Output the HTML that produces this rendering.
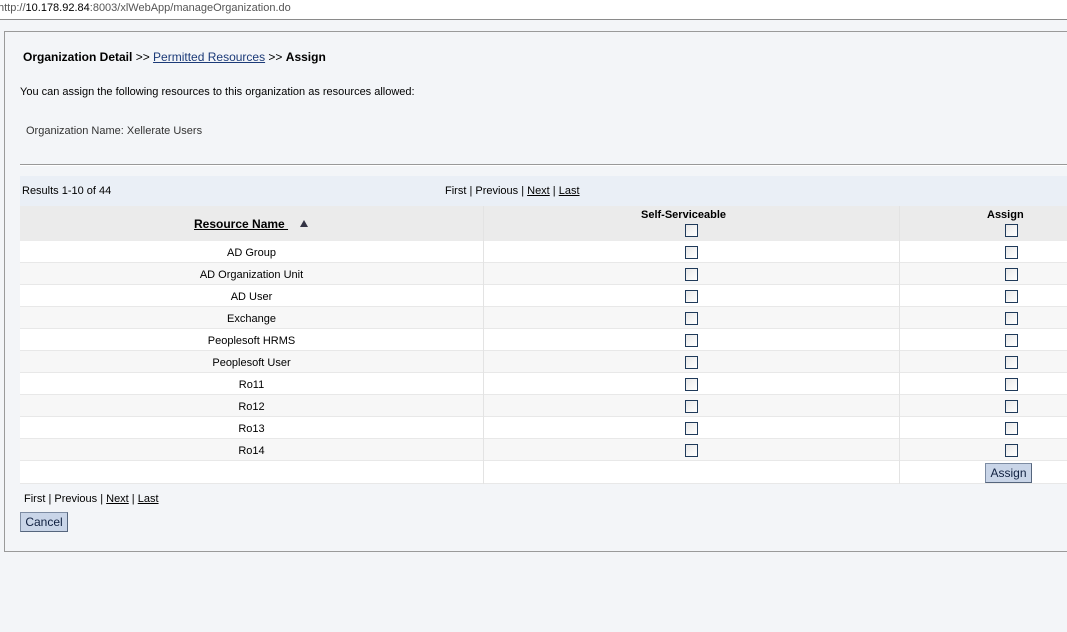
<!DOCTYPE html><html><head><style>
*{margin:0;padding:0;box-sizing:border-box}
body{width:1067px;height:632px;background:#f3f5f8;font-family:"Liberation Sans",sans-serif;font-size:11px;color:#000;position:relative;overflow:hidden}
.a{position:absolute}
a{color:#000;text-decoration:underline}
.cb{position:absolute;width:13px;height:13px;border:1px solid #1f3a5a;background:linear-gradient(135deg,#e8e8e8,#fff)}
.row{position:absolute;left:20px;width:1047px;height:22px;border-bottom:1px solid #e8e8e8}
.row span{position:absolute;left:0;width:463px;text-align:center;top:6px}
.vl{position:absolute;width:1px;background:#e3e3e3}
.btn{position:absolute;background:#c9d5e8;border:1px solid #7d8ca3;border-right-color:#55657d;border-bottom-color:#55657d;font-size:12px;color:#102040;text-align:center}
</style></head><body>
<div class="a" style="left:0;top:0;width:1067px;height:20px;background:#fff;border-bottom:1px solid #8a8a8a"></div>
<div class="a" style="left:-2px;top:2px;font-size:11px;color:#555">http://<b style="font-weight:normal;color:#000">10.178.92.84</b>:8003/xlWebApp/manageOrganization.do</div>
<div class="a" style="left:4px;top:31px;width:1070px;height:521px;border:1px solid #9a9a9a;border-right:none"></div>
<div class="a" style="left:23px;top:50px;font-size:12px"><b>Organization Detail</b> &gt;&gt; <a href="#" style="color:#1b3a78">Permitted Resources</a> &gt;&gt; <b>Assign</b></div>
<div class="a" style="left:20px;top:86px">You can assign the following resources to this organization as resources allowed:</div>
<div class="a" style="left:26px;top:125px;color:#333">Organization Name: Xellerate Users</div>
<div class="a" style="left:20px;top:164px;width:1047px;height:2px;border-top:1px solid #999;border-bottom:1px solid #fff"></div>
<div class="a" style="left:20px;top:176px;width:1047px;height:30px;background:#eaeff6"></div>
<div class="a" style="left:22px;top:185px">Results 1-10 of 44</div>
<div class="a" style="left:445px;top:185px">First | Previous | <a href="#">Next</a> | <a href="#">Last</a></div>
<div class="a" style="left:20px;top:206px;width:1047px;height:35px;background:#ebebeb"></div>
<div class="a" style="left:194px;top:217px;font-size:12px;font-weight:bold;text-decoration:underline">Resource Name&nbsp;</div>
<div class="a" style="left:300px;top:220px;width:0;height:0;border-left:4px solid transparent;border-right:4px solid transparent;border-bottom:7px solid #334"></div>
<div class="a" style="left:641px;top:209px;font-weight:bold">Self-Serviceable</div>
<div class="a" style="left:987px;top:209px;font-weight:bold">Assign</div>
<div class="cb" style="left:685px;top:224px"></div><div class="cb" style="left:1005px;top:224px"></div>
<div class="row" style="top:241px;background:#fff"><span>AD Group</span></div>
<div class="row" style="top:263px;background:#f7f7f7"><span>AD Organization Unit</span></div>
<div class="row" style="top:285px;background:#fff"><span>AD User</span></div>
<div class="row" style="top:307px;background:#f7f7f7"><span>Exchange</span></div>
<div class="row" style="top:329px;background:#fff"><span>Peoplesoft HRMS</span></div>
<div class="row" style="top:351px;background:#f7f7f7"><span>Peoplesoft User</span></div>
<div class="row" style="top:373px;background:#fff"><span>Ro11</span></div>
<div class="row" style="top:395px;background:#f7f7f7"><span>Ro12</span></div>
<div class="row" style="top:417px;background:#fff"><span>Ro13</span></div>
<div class="row" style="top:439px;background:#f7f7f7"><span>Ro14</span></div>
<div class="row" style="top:461px;background:#fff;height:23px"></div>
<div class="vl" style="left:483px;top:206px;height:278px"></div>
<div class="vl" style="left:899px;top:206px;height:278px"></div>
<div class="cb" style="left:685px;top:246px"></div><div class="cb" style="left:1005px;top:246px"></div>
<div class="cb" style="left:685px;top:268px"></div><div class="cb" style="left:1005px;top:268px"></div>
<div class="cb" style="left:685px;top:290px"></div><div class="cb" style="left:1005px;top:290px"></div>
<div class="cb" style="left:685px;top:312px"></div><div class="cb" style="left:1005px;top:312px"></div>
<div class="cb" style="left:685px;top:334px"></div><div class="cb" style="left:1005px;top:334px"></div>
<div class="cb" style="left:685px;top:356px"></div><div class="cb" style="left:1005px;top:356px"></div>
<div class="cb" style="left:685px;top:378px"></div><div class="cb" style="left:1005px;top:378px"></div>
<div class="cb" style="left:685px;top:400px"></div><div class="cb" style="left:1005px;top:400px"></div>
<div class="cb" style="left:685px;top:422px"></div><div class="cb" style="left:1005px;top:422px"></div>
<div class="cb" style="left:685px;top:444px"></div><div class="cb" style="left:1005px;top:444px"></div>
<div class="btn" style="left:985px;top:463px;width:47px;height:20px;line-height:18px">Assign</div>
<div class="a" style="left:24px;top:493px">First | Previous | <a href="#">Next</a> | <a href="#">Last</a></div>
<div class="btn" style="left:20px;top:512px;width:48px;height:20px;line-height:18px">Cancel</div>
</body></html>
